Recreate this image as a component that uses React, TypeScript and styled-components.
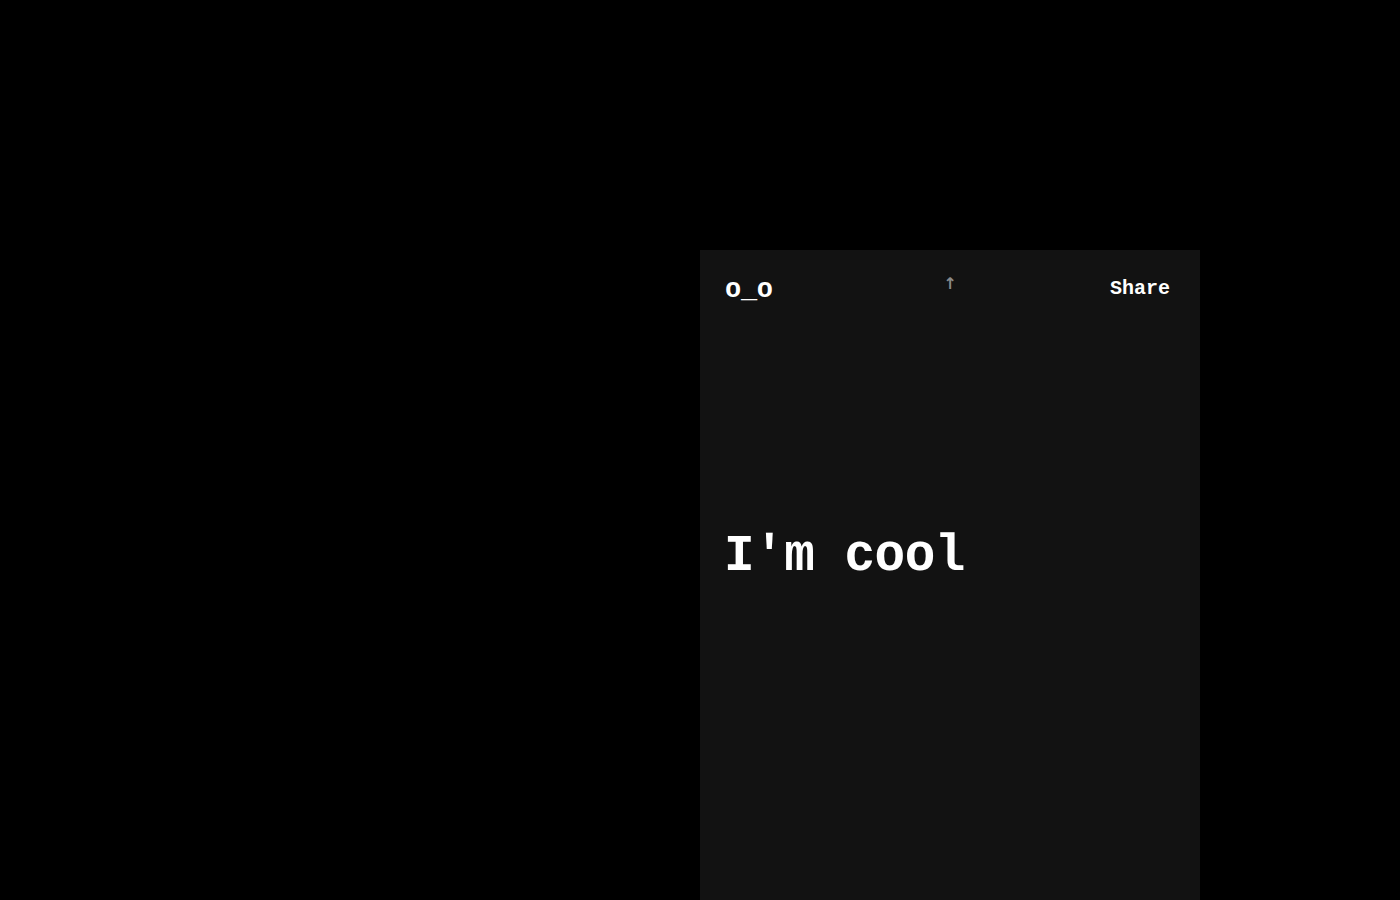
import React from "react";
import styled, { createGlobalStyle } from "styled-components";

const Global = createGlobalStyle`
  html, body { margin: 0; padding: 0; background: #000; }
  body { font-family: "Liberation Mono", "DejaVu Sans Mono", monospace; }
`;

const Page = styled.div`
  width: 1400px;
  height: 900px;
  overflow: hidden;
  background: #000;
  display: flex;
  padding: 250px 0 0 700px;
  box-sizing: border-box;
`;

const Card = styled.div`
  width: 500px;
  height: 650px;
  background: #121212;
  display: flex;
  flex-direction: column;
`;

const Header = styled.header`
  display: grid;
  grid-template-columns: 1fr auto 1fr;
  align-items: center;
  padding: 24px 25px 0 25px;
  height: 28px;
`;

const Logo = styled.div`
  font-family: "Liberation Mono", monospace;
  font-weight: 700;
  font-size: 27px;
  color: #fff;
  line-height: 1;
  letter-spacing: -0.3px;
  padding-top: 3px;
`;

const Arrow = styled.div`
  font-family: "DejaVu Sans", sans-serif;
  font-size: 16px;
  color: #8a8a8a;
  line-height: 1;
  margin-top: -10px;
  font-weight: 700;
`;

const Share = styled.div`
  justify-self: end;
  margin-right: 5px;
  font-family: "Liberation Mono", monospace;
  font-weight: 700;
  font-size: 20px;
  color: #fff;
  line-height: 1;
`;

const Main = styled.main`
  padding: 229px 0 0 24px;
`;

const Title = styled.h1`
  margin: 0;
  font-family: "Liberation Mono", monospace;
  font-weight: 700;
  font-size: 51px;
  line-height: 1;
  color: #fff;
  letter-spacing: -0.5px;
`;

export default function App() {
  return (
    <>
      <Global />
      <Page>
        <Card>
          <Header>
            <Logo>o_o</Logo>
            <Arrow>↑</Arrow>
            <Share>Share</Share>
          </Header>
          <Main>
            <Title>I'm cool</Title>
          </Main>
        </Card>
      </Page>
    </>
  );
}
